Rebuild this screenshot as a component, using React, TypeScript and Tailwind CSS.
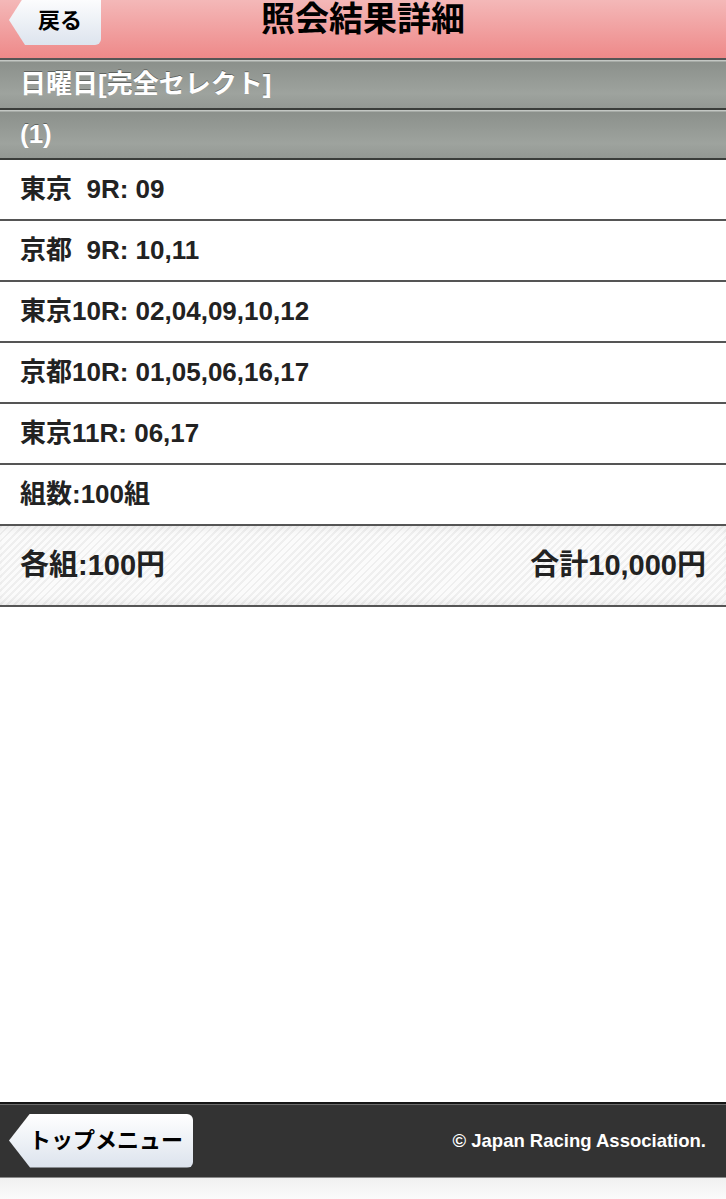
const rows = [
  { place: "東京", race: "  9R", horses: "09" },
  { place: "京都", race: "  9R", horses: "10,11" },
  { place: "東京", race: "10R", horses: "02,04,09,10,12" },
  { place: "京都", race: "10R", horses: "01,05,06,16,17" },
  { place: "東京", race: "11R", horses: "06,17" },
];

function GrayBar({ children }: { children: React.ReactNode }) {
  return (
    <div className="h-[50px] flex items-center px-5 border-b-2 border-[#3a3d3a] bg-[linear-gradient(to_bottom,#c3c7c3_0px,#c3c7c3_1px,#8b908b_2px,#9ea39e_70%,#939893_100%)] text-white font-bold text-[26px] [text-shadow:0_-1px_0_rgba(0,0,0,0.35)]">
      {children}
    </div>
  );
}

export default function App() {
  return (
    <div className="min-h-screen flex flex-col bg-white text-[#222] font-['Liberation_Sans','Noto_Sans_CJK_JP',sans-serif]">
      {/* header */}
      <header className="h-[60px] grid grid-cols-[1fr_auto_1fr] border-b-2 border-[#555] bg-[linear-gradient(to_bottom,#f4b8b8,#ee8989)] overflow-hidden">
        <div className="flex items-start">
          <a className="ml-[9px] -mt-[5px] h-[50px] w-[92px] flex items-center justify-center pl-[10px] rounded-r-[6px] bg-[linear-gradient(to_bottom,#ffffff,#dde4ee)] [clip-path:polygon(16px_0,100%_0,100%_100%,16px_100%,0_50%)] text-black font-bold text-[22px]">
            戻る
          </a>
        </div>
        <h1 className="text-[34px] leading-[38px] font-bold text-black">照会結果詳細</h1>
        <div />
      </header>

      <GrayBar>日曜日[完全セレクト]</GrayBar>
      <GrayBar>(1)</GrayBar>

      {rows.map((r, i) => (
        <div key={i} className="h-[61px] flex items-center px-5 border-b-2 border-[#555] font-bold text-[26px] whitespace-pre">
          {r.place}
          {r.race}: {r.horses}
        </div>
      ))}
      <div className="h-[61px] flex items-center px-5 border-b-2 border-[#555] font-bold text-[26px]">
        組数:100組
      </div>

      {/* total */}
      <div className="h-[81px] flex items-center justify-between px-5 border-b-2 border-[#555] bg-[repeating-linear-gradient(135deg,#efefef_0px,#efefef_2px,#fbfbfb_2px,#fbfbfb_5px)] shadow-[inset_0_8px_10px_-6px_rgba(0,0,0,0.08),inset_0_-8px_10px_-6px_rgba(0,0,0,0.08)] font-bold text-[29px]">
        <span>各組:100円</span>
        <span>合計10,000円</span>
      </div>

      <div className="flex-1" />

      {/* footer */}
      <footer className="h-[76px] flex items-center justify-between pl-[9px] pr-5 border-t-2 border-[#151515] border-b border-b-[#8a8a8a] bg-[#333333] shadow-[inset_0_1px_0_#6a6a6a]">
        <a className="h-[54px] w-[184px] flex items-center pl-[20px] rounded-r-[6px] bg-[linear-gradient(to_bottom,#ffffff,#dce3ed)] [clip-path:polygon(21px_0,100%_0,100%_100%,21px_100%,0_50%)] text-black font-bold text-[22px]">
          トップメニュー
        </a>
        <span className="text-white font-bold text-[18.5px]">© Japan Racing Association.</span>
      </footer>
      <div className="h-[21px] bg-[linear-gradient(to_bottom,#f0f0f0,#fbfbfb)]" />
    </div>
  );
}
